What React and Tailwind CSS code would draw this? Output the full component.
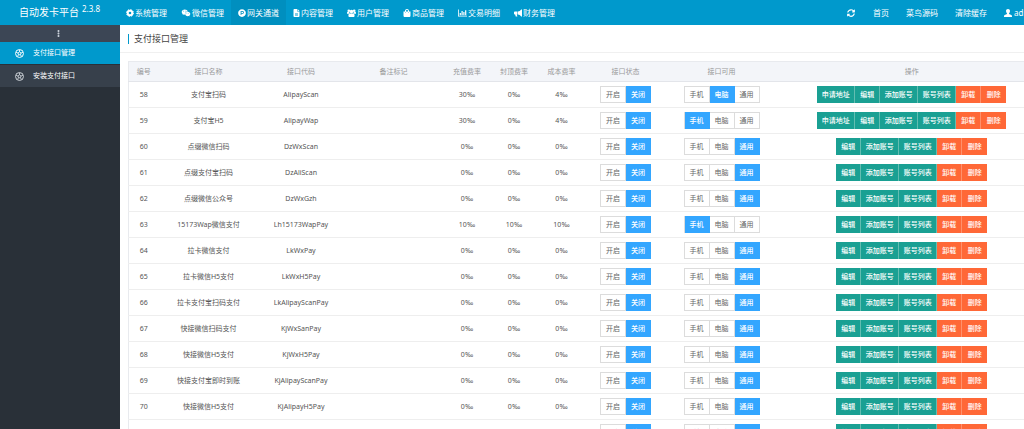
import {
    FaWeixin,
    FaProductHunt,
    FaShoppingBag,
    FaEllipsisV,
    FaSyncAlt,
} from "react-icons/fa";
import { FaFileLines } from "react-icons/fa6";

function CogIcon({ className }) {
    return (
        <svg viewBox="0 0 16 16" className={className} fill="none" stroke="currentColor" aria-hidden="true">
            <circle cx="8" cy="8" r="4.6" strokeWidth="4" />
            <circle cx="8" cy="8" r="7" strokeWidth="2" strokeDasharray="2.75 2.75" />
        </svg>
    );
}

function UsersIcon({ className }) {
    return (
        <svg viewBox="0 0 18 16" className={className} fill="currentColor" aria-hidden="true">
            <circle cx="3.6" cy="3.4" r="2.6" />
            <circle cx="14.4" cy="3.4" r="2.6" />
            <circle cx="9" cy="5.2" r="3.6" />
            <path d="M0 9.5V8c0-1.6.8-2.4 2-2.4h2.6C5 8 5 8.6 5.6 9.5zM18 9.5V8c0-1.6-.8-2.4-2-2.4h-2.6c-.4 2.4-.4 3-1 3.9z" />
            <path d="M2.8 13.4C2.8 10.4 4 9 6 9h6c2 0 3.2 1.4 3.2 4.4 0 1.6-.9 2.6-2.4 2.6H5.2c-1.5 0-2.4-1-2.4-2.6z" />
        </svg>
    );
}

function ChartIcon({ className }) {
    return (
        <svg viewBox="0 0 18 16" className={className} fill="currentColor" aria-hidden="true">
            <path d="M0 1h1.6v12.4H18V15H0z" />
            <path d="M3.4 8h2.4v4.4H3.4zM7 4h2.4v8.4H7zM10.6 6h2.4v6.4h-2.4zM14.2 2.4h2.4v10h-2.4z" />
        </svg>
    );
}

function HornIcon({ className }) {
    return (
        <svg viewBox="0 0 16 16" className={className} fill="currentColor" aria-hidden="true">
            <path d="M0 6.4C0 5.4.7 5 1.6 5H7v6H5.6l1.2 4H3.4L2.4 11H1.6C.7 11 0 10.600 0 9.600z" />
            <path d="M8 5c2.400-.3 4.600-1.600 6.400-4H16v14h-1.600c-1.800-2.400-4-3.700-6.400-4z" />
        </svg>
    );
}

function UserIcon({ className }) {
    return (
        <svg viewBox="0 0 16 16" className={className} fill="currentColor" aria-hidden="true">
            <path d="M8 0c2.400 0 4 1.700 4 4.200 0 2-.8 3.600-2 4.600v1.400l4.600 2c1 .5 1.400 1.200 1.400 2.200V16H0v-1.600c0-1 .4-1.700 1.400-2.200l4.600-2V8.800c-1.200-1-2-2.600-2-4.600C4 1.700 5.600 0 8 0z" />
        </svg>
    );
}

function BallIcon({ className }) {
    return (
        <svg viewBox="0 0 20 20" className={className} fill="none" stroke="currentColor" aria-hidden="true">
            <circle cx="10" cy="10" r="8.800" strokeWidth="2.200" />
            <path d="M10 6.400l3.400 2.500-1.300 4H7.900l-1.300-4z" strokeWidth="2" />
            <path d="M10 6.400V2M13.400 8.900l4.200-1.400M12.100 12.900l2.700 3.600M7.900 12.900l-2.700 3.600M6.600 8.900L2.400 7.500" strokeWidth="2" />
        </svg>
    );
}

const navItems = [
    { label: "系统管理", Icon: CogIcon, size: "w-2" },
    { label: "微信管理", Icon: FaWeixin, size: "w-2.5" },
    { label: "网关通道", Icon: FaProductHunt, size: "w-2", active: true },
    { label: "内容管理", Icon: FaFileLines, size: "w-[7px]" },
    { label: "用户管理", Icon: UsersIcon, size: "w-[9px]" },
    { label: "商品管理", Icon: FaShoppingBag, size: "w-2" },
    { label: "交易明细", Icon: ChartIcon, size: "w-[9px]" },
    { label: "财务管理", Icon: HornIcon, size: "w-2" },
];

const sideItems = [
    { label: "支付接口管理", active: true },
    { label: "安装支付接口" },
];

const columns = [
    { label: "编号", width: "w-[30px]" },
    { label: "接口名称", width: "w-[100px]" },
    { label: "接口代码", width: "w-[85px]" },
    { label: "备注标记", width: "w-[100px]" },
    { label: "充值费率", width: "w-[47px]" },
    { label: "封顶费率", width: "w-[47px]" },
    { label: "成本费率", width: "w-[48px]" },
    { label: "接口状态", width: "w-[80px]" },
    { label: "接口可用", width: "w-[112px]" },
    { label: "操作", width: "pl-[22px]" },
];

const rows = [
    { id: 58, name: "支付宝扫码", code: "AlipayScan", rates: [30, 0, 4], device: "电脑", apply: true },
    { id: 59, name: "支付宝H5", code: "AlipayWap", rates: [30, 0, 4], device: "手机", apply: true },
    { id: 60, name: "点缀微信扫码", code: "DzWxScan", rates: [0, 0, 0], device: "通用" },
    { id: 61, name: "点缀支付宝扫码", code: "DzAliScan", rates: [0, 0, 0], device: "通用" },
    { id: 62, name: "点缀微信公众号", code: "DzWxGzh", rates: [0, 0, 0], device: "通用" },
    { id: 63, name: "15173Wap微信支付", code: "Lh15173WapPay", rates: [10, 10, 10], device: "手机" },
    { id: 64, name: "拉卡微信支付", code: "LkWxPay", rates: [0, 0, 0], device: "通用" },
    { id: 65, name: "拉卡微信H5支付", code: "LkWxH5Pay", rates: [0, 0, 0], device: "通用" },
    { id: 66, name: "拉卡支付宝扫码支付", code: "LkAlipayScanPay", rates: [0, 0, 0], device: "通用" },
    { id: 67, name: "快接微信扫码支付", code: "KjWxSanPay", rates: [0, 0, 0], device: "通用" },
    { id: 68, name: "快接微信H5支付", code: "KjWxH5Pay", rates: [0, 0, 0], device: "通用" },
    { id: 69, name: "快接支付宝即时到账", code: "KjAlipayScanPay", rates: [0, 0, 0], device: "通用" },
    { id: 70, name: "快接微信H5支付", code: "KjAlipayH5Pay", rates: [0, 0, 0], device: "通用" },
    { id: 71, name: "", code: "", rates: [0, 0, 0], device: "通用" },
];

function Toggle({ options, value }) {
    return (
        <div className="inline-flex border-l border-[#dcdcdc] align-middle">
            {options.map((option) => (
                <button
                    key={option}
                    type="button"
                    aria-pressed={option === value}
                    className={`h-[17px] w-[25px] border-y border-r ${
                        option === value
                            ? "border-[#33a6ff] bg-[#33a6ff] font-medium text-white"
                            : "border-[#dcdcdc] bg-white text-[#666]"
                    }`}
                >
                    {option}
                </button>
            ))}
        </div>
    );
}

function Actions({ apply }) {
    const green = ["编辑", "添加账号", "账号列表"];
    if (apply) green.unshift("申请地址");

    return (
        <div className="inline-flex align-middle font-medium text-white">
            {green.map((label) => (
                <button
                    key={label}
                    type="button"
                    className={`h-[17px] border-r border-[#63bdb1] bg-[#1aa093] last-of-type:border-r-0 ${label.length > 2 ? "w-[38px]" : "w-[25px]"}`}
                >
                    {label}
                </button>
            ))}
            <button type="button" className="h-[17px] w-[25px] border-r border-[#ff906c] bg-[#ff6837]">
                卸载
            </button>
            <button type="button" className="h-[17px] w-[25px] bg-[#ff6837]">
                删除
            </button>
        </div>
    );
}

function Header() {
    return (
        <header className="flex h-[25px] shrink-0 overflow-hidden whitespace-nowrap bg-[#0099cc] text-[8px] leading-[25px] text-white">
            <h1 className="flex w-[119px] shrink-0 gap-[3px] pl-[19px] text-[10px]">
                自动发卡平台
                <span className="text-[8px] leading-[18px]">2.3.8</span>
            </h1>
            <nav className="flex">
                {navItems.map(({ label, Icon, size, active }) => (
                    <a
                        key={label}
                        href="#"
                        className={`flex items-center gap-px px-[7px] ${active ? "bg-[#008fbf]" : ""}`}
                    >
                        <Icon className={`h-2 shrink-0 ${size}`} />
                        {label}
                    </a>
                ))}
            </nav>
            <div className="ml-auto flex w-[177px] shrink-0 items-center gap-[17px]">
                <button type="button" aria-label="刷新" className="mr-px">
                    <FaSyncAlt className="size-2" />
                </button>
                <a href="#">首页</a>
                <a href="#">菜鸟源码</a>
                <a href="#">清除缓存</a>
                <a href="#" className="flex items-center gap-0.5">
                    <UserIcon className="size-2" />
                    admin
                </a>
            </div>
        </header>
    );
}

function Sidebar() {
    return (
        <aside className="w-[120px] shrink-0 bg-[#293038] text-[7px] text-white">
            <button
                type="button"
                aria-label="菜单"
                className="flex h-[17px] w-full items-center justify-center bg-[#3c4655] pr-1 text-[#c5ccd6]"
            >
                <FaEllipsisV className="size-[7px]" />
            </button>
            {sideItems.map(({ label, active }) => (
                <a
                    key={label}
                    href="#"
                    className={`flex h-[22px] items-center gap-[9px] pl-[15px] ${active ? "bg-[#0099cc]" : "mt-px bg-[#37404b]"}`}
                >
                    <BallIcon className={`size-[9px] ${active ? "" : "text-[#cdd2d8]"}`} />
                    {label}
                </a>
            ))}
        </aside>
    );
}

export default function App() {
    return (
        <div className="flex h-screen flex-col overflow-hidden bg-white font-['Noto_Sans','Noto_Sans_CJK_SC',sans-serif]">
            <Header />
            <div className="flex min-h-0 flex-1">
                <Sidebar />
                <main className="min-w-0 flex-1 overflow-hidden">
                    <div className="flex h-7 items-center border-b border-[#f0f0f0] pl-2">
                        <h2 className="border-l border-[#0099cc] pl-[5px] text-[9px] leading-[10px] text-[#444]">
                            支付接口管理
                        </h2>
                    </div>
                    <div className="pl-2 pt-2">
                        <table className="w-full table-fixed border-l border-t border-[#e8eaee] text-center text-[7px] leading-[10px] text-[#555]">
                            <thead>
                                <tr className="h-5 border-b border-[#e3e5ea] bg-[#f3f5f9] text-[#999]">
                                    {columns.map(({ label, width }) => (
                                        <th key={label} className={`p-0 font-normal ${width}`}>
                                            {label}
                                        </th>
                                    ))}
                                </tr>
                            </thead>
                            <tbody>
                                {rows.map((row) => (
                                    <tr key={row.id} className="h-[26px] whitespace-nowrap border-b border-[#eee]">
                                        <td>{row.id}</td>
                                        <td>{row.name}</td>
                                        <td>{row.code}</td>
                                        <td></td>
                                        {row.rates.map((rate, i) => (
                                            <td key={i}>{rate}‰</td>
                                        ))}
                                        <td>
                                            <Toggle options={["开启", "关闭"]} value="关闭" />
                                        </td>
                                        <td>
                                            <Toggle options={["手机", "电脑", "通用"]} value={row.device} />
                                        </td>
                                        <td className="pl-[22px]">
                                            <Actions apply={row.apply} />
                                        </td>
                                    </tr>
                                ))}
                            </tbody>
                        </table>
                    </div>
                </main>
            </div>
        </div>
    );
}
